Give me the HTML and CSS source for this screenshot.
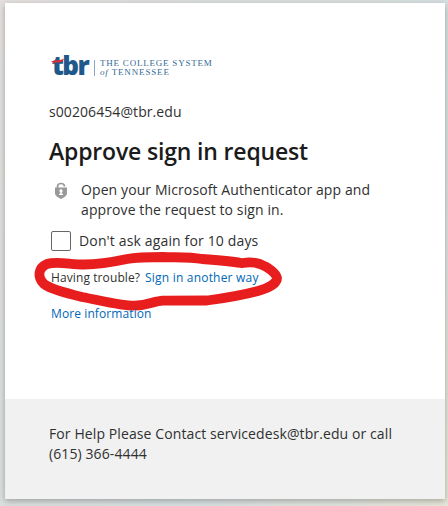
FILE: index.html
```html
<!DOCTYPE html>
<html lang="en">
<head>
  <meta charset="UTF-8">
  <title>Approve sign in request</title>
  <link rel="stylesheet" href="styles.css">
</head>
<body>
  <div class="card">
    <main class="content">
      <div class="logo">
        <div class="brand">
          <span class="brand-name">tbr</span>
          <svg class="brand-swoosh" width="17" height="7" viewBox="0 0 17 7">
            <path d="M0 3.6C4 1.3 9 2.8 13 .4L11.5 3.6C8 5.2 5 3.8 1 6L2 4.2Z" fill="#d6303b"/>
          </svg>
        </div>
        <div class="brand-text">
          <span class="brand-line1">THE COLLEGE SYSTEM</span>
          <span class="brand-line2"><i>of</i> TENNESSEE</span>
        </div>
      </div>
      <div class="email">s00206454@tbr.edu</div>
      <h1>Approve sign in request</h1>
      <div class="message">
        <svg class="lock" width="14" height="18" viewBox="0 0 14 18">
          <path d="M3.5 7V4.5C3.5 .5 10.5 .5 10.5 4.5" fill="none" stroke="#999" stroke-width="1.7"/>
          <path d="M1 5.5H13V11C13 14 10 15.5 7 17C4 15.5 1 14 1 11Z" fill="#999"/>
          <path d="M7 7.2a1.6 1.6 0 0 1 .8 3v1.5h1.2v1.3H5v-1.3h1.2v-1.5A1.6 1.6 0 0 1 7 7.2Z" fill="#fff"/>
        </svg>
        <div>
          <div>Open your Microsoft Authenticator app and</div>
          <div>approve the request to sign in.</div>
        </div>
      </div>
      <label class="remember">
        <input type="checkbox">
        <span>Don't ask again for 10 days</span>
      </label>
      <div class="trouble">
        <span>Having trouble?</span>
        <a class="another" href="#">Sign in another way</a>
        <svg class="marker" width="260" height="70" viewBox="0 0 260 70">
          <path d="M211 16C200 14 186 13 172 12C160 10 146 10.500 133 10C121 10 108 10 97 12C83 15 70 17.500 54 17.500C40 17.500 27 14 17 17C8 21 7 30 14 37C20 42 36 46 52 50C73 54 91 59 105 58.700C119 58 124 54 133 53.700L177 53.500C196 51 213 48 228 44C239 41 247 36 247 31C246 26 238 20 230 17C224 15 219 15 213 16"/>
        </svg>
      </div>
      <a class="more" href="#">More information</a>
    </main>
    <footer>
      <div>For Help Please Contact servicedesk@tbr.edu or call</div>
      <div>(615) 366-4444</div>
    </footer>
  </div>
</body>
</html>
```
FILE: styles.css
```css
* {
  box-sizing: border-box;
}
body {
  margin: 0;
  height: 506px;
  padding: 3px 3px 7px 5px;
  overflow: hidden;
  font-family: "Open Sans", "Noto Sans", sans-serif;
  font-size: 14px;
  line-height: 20px;
  letter-spacing: 0.1px;
  color: #303030;
  white-space: nowrap;
  background: linear-gradient(120deg, #e3dfde 0%, #d9dfdb 35%, #d8e0e2 65%, #e6e6d8 100%);
}
.card {
  height: 496px;
  background: #fff;
  box-shadow: 0 2px 6px rgba(0,0,0,0.28);
}
.content {
  height: 396px;
  padding: 50px 44px 0;
}
.logo {
  display: flex;
  height: 26px;
  margin-left: 3px;
}
.brand {
  position: relative;
  width: 43px;
  height: 24px;
}
.brand::after {
  content: "";
  position: absolute;
  right: 0;
  top: 7px;
  width: 1px;
  height: 16px;
  background: #87a9c3;
}
.brand-name {
  font-size: 26px;
  font-weight: 800;
  line-height: 24px;
  letter-spacing: -1.6px;
  color: #20588b;
}
.brand-swoosh {
  position: absolute;
  left: -1px;
  top: 5px;
}
.brand-text {
  display: flex;
  flex-direction: column;
  padding: 6px 0 0 5px;
  font-family: "Liberation Serif", serif;
  font-size: 9px;
  line-height: 9px;
  color: #356b95;
}
.brand-line1 {
  letter-spacing: 0.78px;
}
.brand-line2 {
  letter-spacing: 0.85px;
}
.email {
  margin-top: 23px;
  letter-spacing: 0.08px;
}
h1 {
  margin: 14px 0 0;
  font-size: 23px;
  font-weight: 600;
  line-height: 30px;
  letter-spacing: -0.17px;
  color: #1b1b1b;
}
.message {
  display: flex;
  gap: 13px;
  margin-top: 14px;
  padding-left: 5px;
}
.lock {
  margin-top: 2px;
}
.remember {
  display: flex;
  align-items: center;
  gap: 8px;
  height: 20px;
  margin: 11px 0 0 2px;
  letter-spacing: 0.15px;
}
.remember input {
  appearance: none;
  width: 20px;
  height: 20px;
  margin: 0;
  border: 1px solid #666;
  border-radius: 2px;
}
.trouble {
  display: flex;
  gap: 5px;
  position: relative;
  margin: 17px 0 0 2px;
  font-size: 12px;
}
a {
  color: #0067b8;
  text-decoration: none;
}
.another {
  letter-spacing: 0.2px;
}
/* hand-drawn ring around the alternate sign in link */
.marker {
  position: absolute;
  left: -21px;
  top: -21px;
  fill: none;
  stroke: #e71d1e;
  stroke-width: 9.8;
  stroke-linecap: round;
  stroke-linejoin: round;
  pointer-events: none;
}
.more {
  display: block;
  position: relative;
  margin: 16px 0 0 2px;
  font-size: 12px;
}
footer {
  height: 100px;
  padding: 25px 44px;
  background: #f1f1f1;
}
```
